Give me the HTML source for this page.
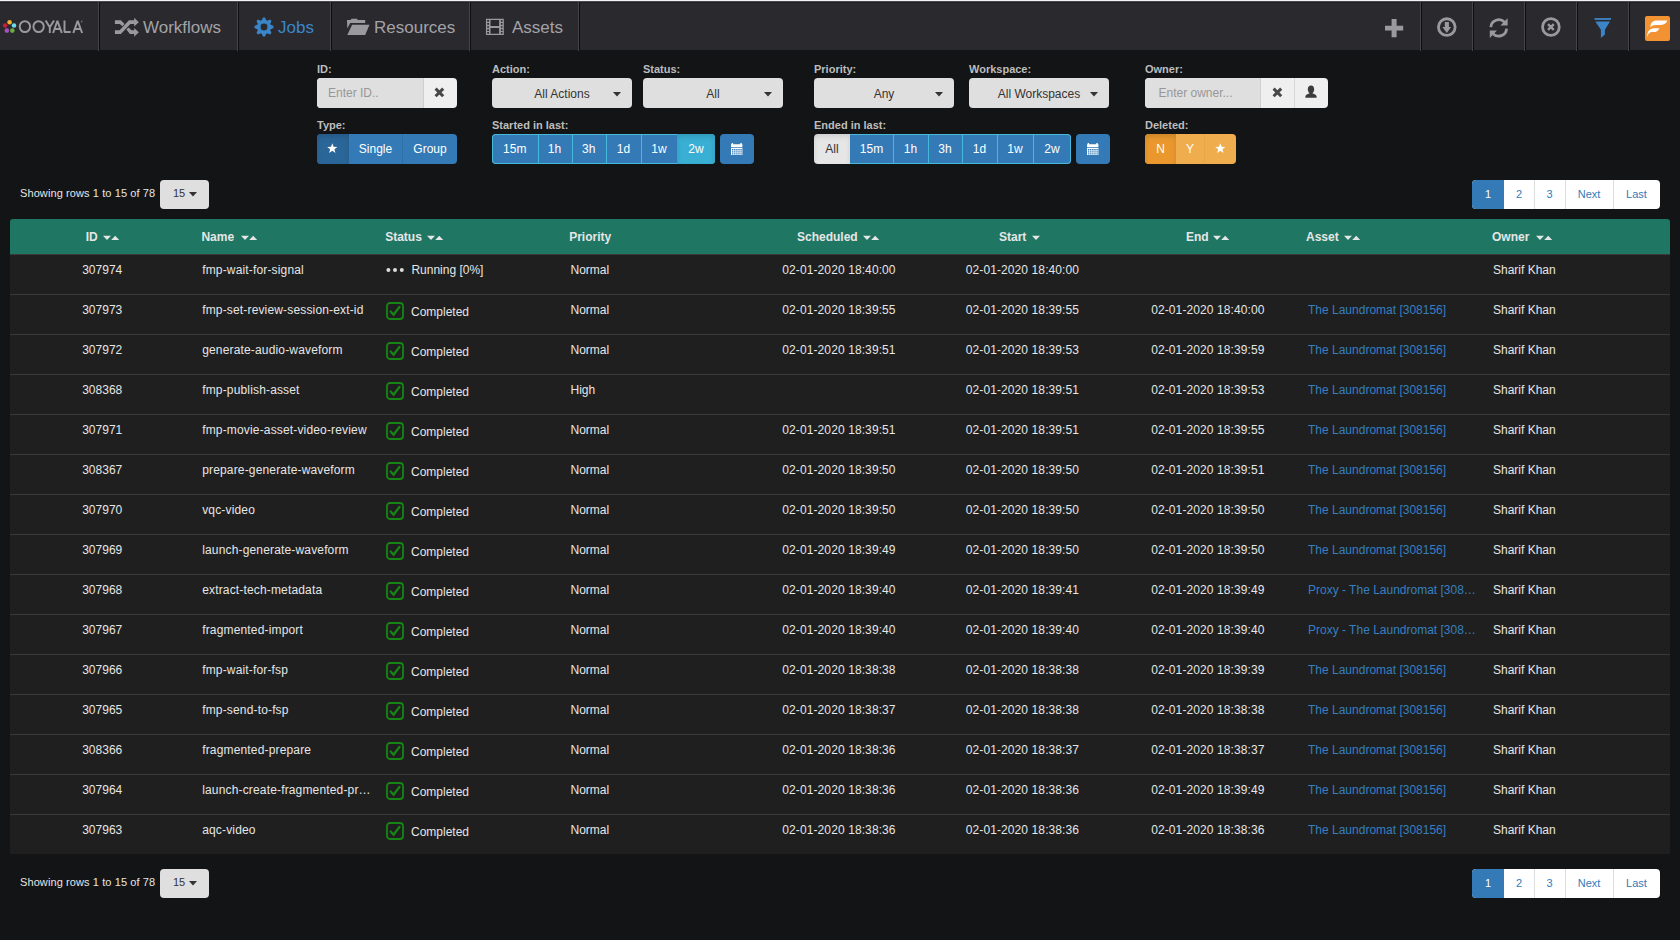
<!DOCTYPE html>
<html><head><meta charset="utf-8"><title>Jobs</title>
<style>
html,body{margin:0;padding:0;}
body{width:1680px;height:940px;overflow:hidden;background:#131416;position:relative;font-family:"Liberation Sans", sans-serif;}
.t{position:absolute;white-space:nowrap;}
.b{position:absolute;}
</style></head><body>
<div class="b" style="left:0px;top:0px;width:1680px;height:50px;background:#2a292e"></div>
<div class="b" style="left:0px;top:0px;width:1680px;height:1px;background:#f3f3f5"></div>
<div class="b" style="left:0px;top:1px;width:1680px;height:1px;background:#4a4a4e"></div>
<div class="b" style="left:0px;top:2px;width:1680px;height:1px;background:#212024"></div>
<div class="b" style="left:98px;top:2px;width:1px;height:49px;background:#454547"></div>
<div class="b" style="left:99px;top:2px;width:1px;height:49px;background:#0d0d0e"></div>
<div class="b" style="left:237px;top:2px;width:1px;height:49px;background:#454547"></div>
<div class="b" style="left:238px;top:2px;width:1px;height:49px;background:#0d0d0e"></div>
<div class="b" style="left:330px;top:2px;width:1px;height:49px;background:#454547"></div>
<div class="b" style="left:331px;top:2px;width:1px;height:49px;background:#0d0d0e"></div>
<div class="b" style="left:469px;top:2px;width:1px;height:49px;background:#454547"></div>
<div class="b" style="left:470px;top:2px;width:1px;height:49px;background:#0d0d0e"></div>
<div class="b" style="left:578px;top:2px;width:1px;height:49px;background:#454547"></div>
<div class="b" style="left:579px;top:2px;width:1px;height:49px;background:#0d0d0e"></div>
<div class="b" style="left:1420px;top:2px;width:1px;height:49px;background:#454547"></div>
<div class="b" style="left:1421px;top:2px;width:1px;height:49px;background:#0d0d0e"></div>
<div class="b" style="left:1472px;top:2px;width:1px;height:49px;background:#454547"></div>
<div class="b" style="left:1473px;top:2px;width:1px;height:49px;background:#0d0d0e"></div>
<div class="b" style="left:1524px;top:2px;width:1px;height:49px;background:#454547"></div>
<div class="b" style="left:1525px;top:2px;width:1px;height:49px;background:#0d0d0e"></div>
<div class="b" style="left:1576px;top:2px;width:1px;height:49px;background:#454547"></div>
<div class="b" style="left:1577px;top:2px;width:1px;height:49px;background:#0d0d0e"></div>
<div class="b" style="left:1628px;top:2px;width:1px;height:49px;background:#454547"></div>
<div class="b" style="left:1629px;top:2px;width:1px;height:49px;background:#0d0d0e"></div>
<svg class="b" style="left:0;top:0" width="98" height="50" viewBox="0 0 98 50">
<circle cx="9.6" cy="22.3" r="2.3" fill="#f5b22f"/>
<circle cx="5.1" cy="25.5" r="2.3" fill="#c21f3a"/>
<circle cx="14.0" cy="25.5" r="2.3" fill="#70d6ea"/>
<circle cx="6.9" cy="30.6" r="2.3" fill="#a84fc0"/>
<circle cx="12.3" cy="30.6" r="2.3" fill="#69ad3a"/>
<g fill="none" stroke="#9a9a9e" stroke-width="1.95" stroke-linejoin="bevel">
<ellipse cx="24.9" cy="26.6" rx="5.2" ry="5.45"/>
<ellipse cx="38.6" cy="26.6" rx="5.2" ry="5.45"/>
<path d="M45.6 20.5 L49.8 27.2 L54 20.5 M49.8 27.2 V33"/>
<path d="M53.1 33 L57.4 20.8 L61.8 33 M54.6 29 H60.3"/>
<path d="M64.5 20.5 V32.05 H70.7"/>
<path d="M73.3 33 L77.7 20.8 L82.1 33 M74.8 29 H80.6"/>
</g>
<circle cx="81.7" cy="21.5" r="0.9" fill="#6a6a6e"/>
</svg>
<svg class="b" style="left:114px;top:17px" width="26" height="21" viewBox="0 0 26 21">
<g fill="#9a9a9e">
<path d="M0.9 3.3 H6.9 L10.5 6.9 L8.3 9.2 L5.8 7.1 H0.9 Z"/>
<path d="M0.9 13.3 H5.6 L14.9 3.3 H20.2 V0.7 L24.8 5.2 L20.2 9.5 V7.1 H16.4 L6.9 17 H0.9 Z"/>
<path d="M12.4 12.6 L14.6 10.4 L17.4 13.3 H20.2 V11 L24.8 15.3 L20.2 19.7 V17 H15.9 Z"/>
</g></svg>
<div class="t" style="left:143px;top:19.00px;font-size:17px;line-height:17px;color:#a3a3a7;">Workflows</div>
<svg class="b" style="left:254px;top:17px" width="20" height="20" viewBox="0 0 20 20">
<path fill-rule="evenodd" fill="#3b86c9" stroke="#3b86c9" stroke-width="1.1" stroke-linejoin="round" d="M8.37 3.61 L9.28 1.03 L10.72 1.03 L11.63 3.61 L13.37 4.32 L15.84 3.15 L16.85 4.16 L15.68 6.63 L16.39 8.37 L18.97 9.28 L18.97 10.72 L16.39 11.63 L15.68 13.37 L16.85 15.84 L15.84 16.85 L13.37 15.68 L11.63 16.39 L10.72 18.97 L9.28 18.97 L8.37 16.39 L6.63 15.68 L4.16 16.85 L3.15 15.84 L4.32 13.37 L3.61 11.63 L1.03 10.72 L1.03 9.28 L3.61 8.37 L4.32 6.63 L3.15 4.16 L4.16 3.15 L6.63 4.32 Z M10 6.0 A4.0 4.0 0 1 0 10 14.0 A4.0 4.0 0 1 0 10 6.0 Z"/>
</svg>
<div class="t" style="left:278px;top:19.00px;font-size:17px;line-height:17px;color:#3b86c9;">Jobs</div>
<svg class="b" style="left:346px;top:18px" width="24" height="18" viewBox="0 0 24 18">
<g fill="#9a9a9e">
<path d="M1 2 H4.5 L5.5 0.7 H10.9 L12 2 H19.2 V5 H4.2 L1.3 10.6 Z"/>
<path d="M6.1 6.8 H23.5 L19.2 17 H1.3 Z"/>
</g></svg>
<div class="t" style="left:374px;top:19.30px;font-size:17px;line-height:17px;color:#a3a3a7;">Resources</div>
<svg class="b" style="left:485px;top:18px" width="20" height="18" viewBox="0 0 20 18">
<path fill-rule="evenodd" fill="#9a9a9e" d="M0.95 0.7 H18.8 V17 H0.95 Z M2.2 2.1 V3.7 H4.0 V2.1 Z M15.9 2.1 V3.7 H17.5 V2.1 Z M2.2 5.1 V6.8 H4.0 V5.1 Z M15.9 5.1 V6.8 H17.5 V5.1 Z M2.2 8.2 V9.8 H4.0 V8.2 Z M15.9 8.2 V9.8 H17.5 V8.2 Z M2.2 11.2 V12.9 H4.0 V11.2 Z M15.9 11.2 V12.9 H17.5 V11.2 Z M2.2 14.1 V15.8 H4.0 V14.1 Z M15.9 14.1 V15.8 H17.5 V14.1 Z M5.5 2.1 V7.9 H14.1 V2.1 Z M5.5 10.1 V15.8 H14.1 V10.1 Z"/>
</svg>
<div class="t" style="left:512px;top:19.30px;font-size:17px;line-height:17px;color:#a3a3a7;">Assets</div>
<svg class="b" style="left:1384px;top:18px" width="20" height="20" viewBox="0 0 20 20">
<path fill="#9a9a9e" d="M7.6 1 H12.6 V7.8 H19.2 V12.6 H12.6 V19.2 H7.6 V12.6 H1 V7.8 H7.6 Z"/></svg>
<svg class="b" style="left:1436px;top:17px" width="22" height="22" viewBox="0 0 22 22">
<circle cx="10.8" cy="10.1" r="8.35" fill="none" stroke="#9a9a9e" stroke-width="2.8"/>
<path fill="#9a9a9e" d="M8.8 5 H12.9 V10 H15.1 L10.8 15.9 L6.4 10 H8.8 Z"/></svg>
<svg class="b" style="left:1488px;top:16.7px" width="22" height="22" viewBox="0 0 22 22">
<g fill="none" stroke="#9a9a9e" stroke-width="2.7">
<path d="M2.8 10.2 A8 8 0 0 1 16.6 5.2"/>
<path d="M18.6 11.6 A8 8 0 0 1 4.8 16.6"/>
</g>
<path fill="#9a9a9e" d="M19.6 1.2 V8.6 H12.4 Z"/>
<path fill="#9a9a9e" d="M1.8 21 V13.6 H9 Z"/>
</svg>
<svg class="b" style="left:1540px;top:17px" width="22" height="22" viewBox="0 0 22 22">
<circle cx="10.9" cy="10" r="8.35" fill="none" stroke="#9a9a9e" stroke-width="2.8"/>
<path stroke="#9a9a9e" stroke-width="2.4" d="M8 7.1 L13.8 12.9 M13.8 7.1 L8 12.9"/></svg>
<svg class="b" style="left:1594px;top:17px" width="19" height="23" viewBox="0 0 19 23">
<rect x="0.55" y="1.07" width="16.45" height="1.8" fill="#3b85c6"/>
<path fill="#3b85c6" d="M1.3 4.4 H16 L10.9 12.7 V17.6 L6.9 20.9 V12.7 Z"/></svg>
<div class="b" style="left:1645px;top:16px;width:25px;height:25px;background:#f39232;border-radius:2px"></div>
<svg class="b" style="left:1645px;top:16px" width="25" height="25" viewBox="0 0 25 25">
<path fill="#fff" d="M5.5 11.3 C5.3 7.2 7.6 4.6 12 4.6 H22.4 C21 7.7 19.4 8.9 15.8 8.9 H11.2 C8.4 8.9 6.6 9.7 5.5 11.3 Z"/>
<path fill="#fff" d="M2 21.2 C2 16 4.5 12.2 9 12.2 H14.4 C13.2 14.9 11.5 16.1 8.6 16.1 H7.2 C4.6 16.1 3 18 2 21.2 Z"/>
</svg>
<div class="t" style="left:317px;top:63.50px;font-size:11px;line-height:11px;color:#bdbdbd;font-weight:bold;">ID:</div>
<div class="t" style="left:492px;top:63.50px;font-size:11px;line-height:11px;color:#bdbdbd;font-weight:bold;">Action:</div>
<div class="t" style="left:643px;top:63.50px;font-size:11px;line-height:11px;color:#bdbdbd;font-weight:bold;">Status:</div>
<div class="t" style="left:814px;top:63.50px;font-size:11px;line-height:11px;color:#bdbdbd;font-weight:bold;">Priority:</div>
<div class="t" style="left:969px;top:63.50px;font-size:11px;line-height:11px;color:#bdbdbd;font-weight:bold;">Workspace:</div>
<div class="t" style="left:1145px;top:63.50px;font-size:11px;line-height:11px;color:#bdbdbd;font-weight:bold;">Owner:</div>
<div class="t" style="left:317px;top:119.80px;font-size:11px;line-height:11px;color:#bdbdbd;font-weight:bold;">Type:</div>
<div class="t" style="left:492px;top:119.80px;font-size:11px;line-height:11px;color:#bdbdbd;font-weight:bold;">Started in last:</div>
<div class="t" style="left:814px;top:119.80px;font-size:11px;line-height:11px;color:#bdbdbd;font-weight:bold;">Ended in last:</div>
<div class="t" style="left:1145px;top:119.80px;font-size:11px;line-height:11px;color:#bdbdbd;font-weight:bold;">Deleted:</div>
<div class="b" style="left:317px;top:78px;width:140px;height:30px;background:#efefef;border-radius:4px"></div>
<div class="b" style="left:317px;top:78px;width:106px;height:30px;background:#e0dfdf;border-radius:4px 0 0 4px"></div>
<div class="b" style="left:423px;top:78px;width:1px;height:30px;background:#cfcfcf"></div>
<div class="t" style="left:328px;top:87.00px;font-size:12px;line-height:12px;color:#979797;">Enter ID..</div>
<svg class="b" style="left:434.4px;top:86.5px" width="11" height="11" viewBox="0 0 11 11"><path stroke="#474747" stroke-width="3" d="M1.6 1.6 L9.2 9.2 M9.2 1.6 L1.6 9.2"/></svg>
<div class="b" style="left:492px;top:78px;width:140px;height:30px;background:#e0dfdf;border-radius:4px"></div>
<div class="t" style="left:492px;width:140px;text-align:center;top:87.80px;font-size:12px;line-height:12px;color:#333;">All Actions</div>
<svg class="b" style="left:612.5px;top:91.6px" width="8" height="5" viewBox="0 0 8 5"><path fill="#333" d="M0 0 H8 L4 4.5 Z"/></svg>
<div class="b" style="left:643px;top:78px;width:140px;height:30px;background:#e0dfdf;border-radius:4px"></div>
<div class="t" style="left:643px;width:140px;text-align:center;top:87.80px;font-size:12px;line-height:12px;color:#333;">All</div>
<svg class="b" style="left:763.5px;top:91.6px" width="8" height="5" viewBox="0 0 8 5"><path fill="#333" d="M0 0 H8 L4 4.5 Z"/></svg>
<div class="b" style="left:814px;top:78px;width:140px;height:30px;background:#e0dfdf;border-radius:4px"></div>
<div class="t" style="left:814px;width:140px;text-align:center;top:87.80px;font-size:12px;line-height:12px;color:#333;">Any</div>
<svg class="b" style="left:934.5px;top:91.6px" width="8" height="5" viewBox="0 0 8 5"><path fill="#333" d="M0 0 H8 L4 4.5 Z"/></svg>
<div class="b" style="left:969px;top:78px;width:140px;height:30px;background:#e0dfdf;border-radius:4px"></div>
<div class="t" style="left:969px;width:140px;text-align:center;top:87.80px;font-size:12px;line-height:12px;color:#333;">All Workspaces</div>
<svg class="b" style="left:1089.5px;top:91.6px" width="8" height="5" viewBox="0 0 8 5"><path fill="#333" d="M0 0 H8 L4 4.5 Z"/></svg>
<div class="b" style="left:1145px;top:78px;width:183px;height:30px;background:#efefef;border-radius:4px"></div>
<div class="b" style="left:1145px;top:78px;width:115px;height:30px;background:#e0dfdf;border-radius:4px 0 0 4px"></div>
<div class="b" style="left:1260px;top:78px;width:1px;height:30px;background:#cfcfcf"></div>
<div class="b" style="left:1294px;top:78px;width:1px;height:30px;background:#d6d6d6"></div>
<div class="t" style="left:1158.5px;top:87.00px;font-size:12px;line-height:12px;color:#979797;">Enter owner...</div>
<svg class="b" style="left:1271.9px;top:86.5px" width="11" height="11" viewBox="0 0 11 11"><path stroke="#474747" stroke-width="3" d="M1.6 1.6 L9.2 9.2 M9.2 1.6 L1.6 9.2"/></svg>
<svg class="b" style="left:1304px;top:85px" width="14" height="14" viewBox="0 0 14 14">
<path fill="#3c3c3c" d="M7 0.6 C9 0.6 10.2 2.2 10.2 4.2 C10.2 6 9.4 7.4 8.6 7.9 V8.6 C11 9.2 12.6 10.2 12.6 11.4 V12.8 H1.4 V11.4 C1.4 10.2 3 9.2 5.4 8.6 V7.9 C4.6 7.4 3.8 6 3.8 4.2 C3.8 2.2 5 0.6 7 0.6 Z"/></svg>
<div class="b" style="left:317px;top:134px;width:140px;height:30px;background:#337ab7;border-radius:4px"></div>
<div class="b" style="left:317px;top:134px;width:32px;height:30px;background:#2b6699;border-radius:4px 0 0 4px;box-shadow:inset 0 3px 5px rgba(0,0,0,.125)"></div>
<div class="b" style="left:402px;top:134px;width:1px;height:30px;background:#2f6fa7"></div>
<svg class="b" style="left:327.1px;top:143.4px" width="10.6" height="10.6" viewBox="0 0 10 10"><path fill="#fff" d="M5 0.3 L6.2 3.6 L9.8 3.7 L7 5.9 L8 9.5 L5 7.4 L2 9.5 L3 5.9 L0.2 3.7 L3.8 3.6 Z"/></svg>
<div class="t" style="left:349px;width:53px;text-align:center;top:143.10px;font-size:12px;line-height:12px;color:#fff;">Single</div>
<div class="t" style="left:403px;width:54px;text-align:center;top:143.10px;font-size:12px;line-height:12px;color:#fff;">Group</div>
<div class="b" style="left:492px;top:134px;width:223px;height:30px;background:#337ab7;border-radius:4px;box-shadow:inset 0 0 0 1px #46b8da"></div>
<div class="b" style="left:677px;top:134px;width:38px;height:30px;background:#39afd3;border-radius:0 4px 4px 0;box-shadow:inset 0 3px 5px rgba(0,0,0,.125)"></div>
<div class="b" style="left:537.5px;top:134px;width:1px;height:30px;background:#46b8da"></div>
<div class="b" style="left:571.5px;top:134px;width:1px;height:30px;background:#46b8da"></div>
<div class="b" style="left:606px;top:134px;width:1px;height:30px;background:#46b8da"></div>
<div class="b" style="left:641px;top:134px;width:1px;height:30px;background:#46b8da"></div>
<div class="t" style="left:492px;width:45.5px;text-align:center;top:143.10px;font-size:12px;line-height:12px;color:#fff;">15m</div>
<div class="t" style="left:537.5px;width:34.0px;text-align:center;top:143.10px;font-size:12px;line-height:12px;color:#fff;">1h</div>
<div class="t" style="left:571.5px;width:34.5px;text-align:center;top:143.10px;font-size:12px;line-height:12px;color:#fff;">3h</div>
<div class="t" style="left:606px;width:35px;text-align:center;top:143.10px;font-size:12px;line-height:12px;color:#fff;">1d</div>
<div class="t" style="left:641px;width:36px;text-align:center;top:143.10px;font-size:12px;line-height:12px;color:#fff;">1w</div>
<div class="t" style="left:677px;width:38px;text-align:center;top:143.10px;font-size:12px;line-height:12px;color:#fff;">2w</div>
<div class="b" style="left:720px;top:134px;width:34px;height:30px;background:#337ab7;border-radius:4px"></div>
<svg class="b" style="left:730.6px;top:143px" width="12" height="13" viewBox="0 0 12 13"><path fill-rule="evenodd" fill="#fff" d="M0.7 0 H2.1 V1.2 H9.3 V0 H10.7 V1.2 H11.4 V3.9 H0 V1.2 H0.7 Z M0 4.8 H11.4 V12 H0 Z M1.0 6.0 h1.4 v1.4 h-1.4 Z M3.1 6.0 h1.4 v1.4 h-1.4 Z M5.2 6.0 h1.4 v1.4 h-1.4 Z M7.3 6.0 h1.4 v1.4 h-1.4 Z M9.4 6.0 h1.4 v1.4 h-1.4 Z M1.0 8.2 h1.4 v1.4 h-1.4 Z M3.1 8.2 h1.4 v1.4 h-1.4 Z M5.2 8.2 h1.4 v1.4 h-1.4 Z M7.3 8.2 h1.4 v1.4 h-1.4 Z M9.4 8.2 h1.4 v1.4 h-1.4 Z M1.0 10.2 h1.4 v1.4 h-1.4 Z M3.1 10.2 h1.4 v1.4 h-1.4 Z M5.2 10.2 h1.4 v1.4 h-1.4 Z M7.3 10.2 h1.4 v1.4 h-1.4 Z M9.4 10.2 h1.4 v1.4 h-1.4 Z"/></svg>
<div class="b" style="left:814px;top:134px;width:257px;height:30px;background:#337ab7;border-radius:4px;box-shadow:inset 0 0 0 1px #46b8da"></div>
<div class="b" style="left:813px;top:133px;width:37px;height:32px;background:#131416"></div>
<div class="b" style="left:814px;top:134px;width:36px;height:30px;background:#e6e6e6;border-radius:4px 0 0 4px;box-shadow:inset 0 3px 5px rgba(0,0,0,.1)"></div>
<div class="b" style="left:893px;top:134px;width:1px;height:30px;background:#46b8da"></div>
<div class="b" style="left:928px;top:134px;width:1px;height:30px;background:#46b8da"></div>
<div class="b" style="left:962px;top:134px;width:1px;height:30px;background:#46b8da"></div>
<div class="b" style="left:997px;top:134px;width:1px;height:30px;background:#46b8da"></div>
<div class="b" style="left:1033px;top:134px;width:1px;height:30px;background:#46b8da"></div>
<div class="t" style="left:814px;width:36px;text-align:center;top:143.10px;font-size:12px;line-height:12px;color:#333;">All</div>
<div class="t" style="left:850px;width:43px;text-align:center;top:143.10px;font-size:12px;line-height:12px;color:#fff;">15m</div>
<div class="t" style="left:893px;width:35px;text-align:center;top:143.10px;font-size:12px;line-height:12px;color:#fff;">1h</div>
<div class="t" style="left:928px;width:34px;text-align:center;top:143.10px;font-size:12px;line-height:12px;color:#fff;">3h</div>
<div class="t" style="left:962px;width:35px;text-align:center;top:143.10px;font-size:12px;line-height:12px;color:#fff;">1d</div>
<div class="t" style="left:997px;width:36px;text-align:center;top:143.10px;font-size:12px;line-height:12px;color:#fff;">1w</div>
<div class="t" style="left:1033px;width:38px;text-align:center;top:143.10px;font-size:12px;line-height:12px;color:#fff;">2w</div>
<div class="b" style="left:1076px;top:134px;width:34px;height:30px;background:#337ab7;border-radius:4px"></div>
<svg class="b" style="left:1086.6px;top:143px" width="12" height="13" viewBox="0 0 12 13"><path fill-rule="evenodd" fill="#fff" d="M0.7 0 H2.1 V1.2 H9.3 V0 H10.7 V1.2 H11.4 V3.9 H0 V1.2 H0.7 Z M0 4.8 H11.4 V12 H0 Z M1.0 6.0 h1.4 v1.4 h-1.4 Z M3.1 6.0 h1.4 v1.4 h-1.4 Z M5.2 6.0 h1.4 v1.4 h-1.4 Z M7.3 6.0 h1.4 v1.4 h-1.4 Z M9.4 6.0 h1.4 v1.4 h-1.4 Z M1.0 8.2 h1.4 v1.4 h-1.4 Z M3.1 8.2 h1.4 v1.4 h-1.4 Z M5.2 8.2 h1.4 v1.4 h-1.4 Z M7.3 8.2 h1.4 v1.4 h-1.4 Z M9.4 8.2 h1.4 v1.4 h-1.4 Z M1.0 10.2 h1.4 v1.4 h-1.4 Z M3.1 10.2 h1.4 v1.4 h-1.4 Z M5.2 10.2 h1.4 v1.4 h-1.4 Z M7.3 10.2 h1.4 v1.4 h-1.4 Z M9.4 10.2 h1.4 v1.4 h-1.4 Z"/></svg>
<div class="b" style="left:1145px;top:134px;width:91px;height:30px;background:#f0ad4e;border-radius:4px"></div>
<div class="b" style="left:1145px;top:134px;width:31px;height:30px;background:#ea982e;border-radius:4px 0 0 4px;box-shadow:inset 0 3px 5px rgba(0,0,0,.125)"></div>
<div class="b" style="left:1204px;top:134px;width:1px;height:30px;background:#eaa547"></div>
<div class="t" style="left:1145px;width:31px;text-align:center;top:143.10px;font-size:12px;line-height:12px;color:#fff;">N</div>
<div class="t" style="left:1176px;width:28px;text-align:center;top:143.10px;font-size:12px;line-height:12px;color:#fff;">Y</div>
<svg class="b" style="left:1215px;top:143.4px" width="10.6" height="10.6" viewBox="0 0 10 10"><path fill="#fff" d="M5 0.3 L6.2 3.6 L9.8 3.7 L7 5.9 L8 9.5 L5 7.4 L2 9.5 L3 5.9 L0.2 3.7 L3.8 3.6 Z"/></svg>
<div class="t" style="left:20px;top:188.25px;font-size:11px;line-height:11px;color:#e6e6e6;letter-spacing:0.1px;">Showing rows 1 to 15 of 78</div>
<div class="b" style="left:160px;top:180px;width:49px;height:29px;background:#e0dfdf;border-radius:4px"></div>
<div class="t" style="left:173px;top:188.45px;font-size:11px;line-height:11px;color:#333;">15</div>
<svg class="b" style="left:188.5px;top:192px" width="8" height="5" viewBox="0 0 8 5"><path fill="#333" d="M0 0 H8 L4 4.5 Z"/></svg>
<div class="b" style="left:1472px;top:180px;width:188px;height:29px;background:#fff;border-radius:4px"></div>
<div class="b" style="left:1472px;top:180px;width:32px;height:29px;background:#337ab7;border-radius:4px 0 0 4px"></div>
<div class="b" style="left:1534px;top:180px;width:1px;height:29px;background:#dddddd"></div>
<div class="b" style="left:1565px;top:180px;width:1px;height:29px;background:#dddddd"></div>
<div class="b" style="left:1613px;top:180px;width:1px;height:29px;background:#dddddd"></div>
<div class="t" style="left:1472px;width:32px;text-align:center;top:188.55px;font-size:11px;line-height:11px;color:#fff;">1</div>
<div class="t" style="left:1504px;width:30px;text-align:center;top:188.55px;font-size:11px;line-height:11px;color:#337ab7;">2</div>
<div class="t" style="left:1534px;width:31px;text-align:center;top:188.55px;font-size:11px;line-height:11px;color:#337ab7;">3</div>
<div class="t" style="left:1565px;width:48px;text-align:center;top:188.55px;font-size:11px;line-height:11px;color:#337ab7;">Next</div>
<div class="t" style="left:1613px;width:47px;text-align:center;top:188.55px;font-size:11px;line-height:11px;color:#337ab7;">Last</div>
<div class="t" style="left:20px;top:877.25px;font-size:11px;line-height:11px;color:#e6e6e6;letter-spacing:0.1px;">Showing rows 1 to 15 of 78</div>
<div class="b" style="left:160px;top:869px;width:49px;height:29px;background:#e0dfdf;border-radius:4px"></div>
<div class="t" style="left:173px;top:877.45px;font-size:11px;line-height:11px;color:#333;">15</div>
<svg class="b" style="left:188.5px;top:881px" width="8" height="5" viewBox="0 0 8 5"><path fill="#333" d="M0 0 H8 L4 4.5 Z"/></svg>
<div class="b" style="left:1472px;top:869px;width:188px;height:29px;background:#fff;border-radius:4px"></div>
<div class="b" style="left:1472px;top:869px;width:32px;height:29px;background:#337ab7;border-radius:4px 0 0 4px"></div>
<div class="b" style="left:1534px;top:869px;width:1px;height:29px;background:#dddddd"></div>
<div class="b" style="left:1565px;top:869px;width:1px;height:29px;background:#dddddd"></div>
<div class="b" style="left:1613px;top:869px;width:1px;height:29px;background:#dddddd"></div>
<div class="t" style="left:1472px;width:32px;text-align:center;top:877.55px;font-size:11px;line-height:11px;color:#fff;">1</div>
<div class="t" style="left:1504px;width:30px;text-align:center;top:877.55px;font-size:11px;line-height:11px;color:#337ab7;">2</div>
<div class="t" style="left:1534px;width:31px;text-align:center;top:877.55px;font-size:11px;line-height:11px;color:#337ab7;">3</div>
<div class="t" style="left:1565px;width:48px;text-align:center;top:877.55px;font-size:11px;line-height:11px;color:#337ab7;">Next</div>
<div class="t" style="left:1613px;width:47px;text-align:center;top:877.55px;font-size:11px;line-height:11px;color:#337ab7;">Last</div>
<div class="b" style="left:10px;top:219px;width:1660px;height:35px;background:#1f7663;border-radius:3px 3px 0 0"></div>
<div class="b" style="left:10px;top:254px;width:1660px;height:600px;background:#1f1f1f"></div>
<div class="b" style="left:10px;top:254px;width:1660px;height:1px;background:#3a3a3a"></div>
<div class="b" style="left:10px;top:294px;width:1660px;height:1px;background:#3a3a3a"></div>
<div class="b" style="left:10px;top:334px;width:1660px;height:1px;background:#3a3a3a"></div>
<div class="b" style="left:10px;top:374px;width:1660px;height:1px;background:#3a3a3a"></div>
<div class="b" style="left:10px;top:414px;width:1660px;height:1px;background:#3a3a3a"></div>
<div class="b" style="left:10px;top:454px;width:1660px;height:1px;background:#3a3a3a"></div>
<div class="b" style="left:10px;top:494px;width:1660px;height:1px;background:#3a3a3a"></div>
<div class="b" style="left:10px;top:534px;width:1660px;height:1px;background:#3a3a3a"></div>
<div class="b" style="left:10px;top:574px;width:1660px;height:1px;background:#3a3a3a"></div>
<div class="b" style="left:10px;top:614px;width:1660px;height:1px;background:#3a3a3a"></div>
<div class="b" style="left:10px;top:654px;width:1660px;height:1px;background:#3a3a3a"></div>
<div class="b" style="left:10px;top:694px;width:1660px;height:1px;background:#3a3a3a"></div>
<div class="b" style="left:10px;top:734px;width:1660px;height:1px;background:#3a3a3a"></div>
<div class="b" style="left:10px;top:774px;width:1660px;height:1px;background:#3a3a3a"></div>
<div class="b" style="left:10px;top:814px;width:1660px;height:1px;background:#3a3a3a"></div>
<div class="t" style="left:85.7px;top:231.00px;font-size:12px;line-height:12px;color:#e6e6e6;font-weight:bold;">ID</div>
<svg class="b" style="left:103.2px;top:235.3px" width="16" height="6" viewBox="0 0 16 6"><path fill="#e6e6e6" d="M0 0.8 H8 L4 5 Z M8.2 5 L12.2 0.8 L16.2 5 Z"/></svg>
<div class="t" style="left:201.4px;top:231.00px;font-size:12px;line-height:12px;color:#e6e6e6;font-weight:bold;">Name</div>
<svg class="b" style="left:240.6px;top:235.3px" width="16" height="6" viewBox="0 0 16 6"><path fill="#e6e6e6" d="M0 0.8 H8 L4 5 Z M8.2 5 L12.2 0.8 L16.2 5 Z"/></svg>
<div class="t" style="left:385.2px;top:231.00px;font-size:12px;line-height:12px;color:#e6e6e6;font-weight:bold;">Status</div>
<svg class="b" style="left:427.4px;top:235.3px" width="16" height="6" viewBox="0 0 16 6"><path fill="#e6e6e6" d="M0 0.8 H8 L4 5 Z M8.2 5 L12.2 0.8 L16.2 5 Z"/></svg>
<div class="t" style="left:569.2px;top:231.00px;font-size:12px;line-height:12px;color:#e6e6e6;font-weight:bold;">Priority</div>
<div class="t" style="left:797px;top:231.00px;font-size:12px;line-height:12px;color:#e6e6e6;font-weight:bold;">Scheduled</div>
<svg class="b" style="left:863px;top:235.3px" width="16" height="6" viewBox="0 0 16 6"><path fill="#e6e6e6" d="M0 0.8 H8 L4 5 Z M8.2 5 L12.2 0.8 L16.2 5 Z"/></svg>
<div class="t" style="left:999px;top:231.00px;font-size:12px;line-height:12px;color:#e6e6e6;font-weight:bold;">Start</div>
<svg class="b" style="left:1032px;top:235.3px" width="9" height="6" viewBox="0 0 9 6"><path fill="#e6e6e6" d="M0 0.8 H8 L4 5 Z"/></svg>
<div class="t" style="left:1186px;top:231.00px;font-size:12px;line-height:12px;color:#e6e6e6;font-weight:bold;">End</div>
<svg class="b" style="left:1213px;top:235.3px" width="16" height="6" viewBox="0 0 16 6"><path fill="#e6e6e6" d="M0 0.8 H8 L4 5 Z M8.2 5 L12.2 0.8 L16.2 5 Z"/></svg>
<div class="t" style="left:1306px;top:231.00px;font-size:12px;line-height:12px;color:#e6e6e6;font-weight:bold;">Asset</div>
<svg class="b" style="left:1344px;top:235.3px" width="16" height="6" viewBox="0 0 16 6"><path fill="#e6e6e6" d="M0 0.8 H8 L4 5 Z M8.2 5 L12.2 0.8 L16.2 5 Z"/></svg>
<div class="t" style="left:1492px;top:231.00px;font-size:12px;line-height:12px;color:#e6e6e6;font-weight:bold;">Owner</div>
<svg class="b" style="left:1536px;top:235.3px" width="16" height="6" viewBox="0 0 16 6"><path fill="#e6e6e6" d="M0 0.8 H8 L4 5 Z M8.2 5 L12.2 0.8 L16.2 5 Z"/></svg>
<div class="t" style="left:10.0px;width:184.44444444444446px;text-align:center;top:264.00px;font-size:12px;line-height:12px;color:#e6e6e6;">307974</div>
<div class="t" style="left:202.2px;top:264.00px;font-size:12px;line-height:12px;color:#e6e6e6;letter-spacing:0.16px;">fmp-wait-for-signal</div>
<svg class="b" style="left:386px;top:268px" width="18" height="8" viewBox="0 0 18 8"><g fill="#dcdcdc"><circle cx="2.4" cy="2" r="2"/><circle cx="9" cy="2" r="2"/><circle cx="15.8" cy="2" r="2"/></g></svg>
<div class="t" style="left:411.4px;top:264.00px;font-size:12px;line-height:12px;color:#e6e6e6;">Running [0%]</div>
<div class="t" style="left:570.5px;top:264.00px;font-size:12px;line-height:12px;color:#e6e6e6;">Normal</div>
<div class="t" style="left:746.7777777777778px;width:184.44444444444446px;text-align:center;top:264.00px;font-size:12px;line-height:12px;color:#e6e6e6;letter-spacing:0.1px;">02-01-2020 18:40:00</div>
<div class="t" style="left:930.2222222222223px;width:184.44444444444446px;text-align:center;top:264.00px;font-size:12px;line-height:12px;color:#e6e6e6;letter-spacing:0.1px;">02-01-2020 18:40:00</div>
<div class="t" style="left:1493px;top:264.00px;font-size:12px;line-height:12px;color:#e6e6e6;">Sharif Khan</div>
<div class="t" style="left:10.0px;width:184.44444444444446px;text-align:center;top:304.00px;font-size:12px;line-height:12px;color:#e6e6e6;">307973</div>
<div class="t" style="left:202.2px;top:304.00px;font-size:12px;line-height:12px;color:#e6e6e6;letter-spacing:0.16px;">fmp-set-review-session-ext-id</div>
<svg class="b" style="left:386px;top:302px" width="18" height="18" viewBox="0 0 18 18">
<rect x="1" y="1" width="16" height="16" rx="3" fill="none" stroke="#168516" stroke-width="1.8"/>
<path fill="none" stroke="#168516" stroke-width="2.3" stroke-linecap="round" d="M4.6 9.5 L7.6 12.8 L13.4 5"/></svg>
<div class="t" style="left:411px;top:305.70px;font-size:12px;line-height:12px;color:#e6e6e6;">Completed</div>
<div class="t" style="left:570.5px;top:304.00px;font-size:12px;line-height:12px;color:#e6e6e6;">Normal</div>
<div class="t" style="left:746.7777777777778px;width:184.44444444444446px;text-align:center;top:304.00px;font-size:12px;line-height:12px;color:#e6e6e6;letter-spacing:0.1px;">02-01-2020 18:39:55</div>
<div class="t" style="left:930.2222222222223px;width:184.44444444444446px;text-align:center;top:304.00px;font-size:12px;line-height:12px;color:#e6e6e6;letter-spacing:0.1px;">02-01-2020 18:39:55</div>
<div class="t" style="left:1115.6666666666667px;width:184.44444444444457px;text-align:center;top:304.00px;font-size:12px;line-height:12px;color:#e6e6e6;letter-spacing:0.1px;">02-01-2020 18:40:00</div>
<div class="t" style="left:1308px;top:304.00px;font-size:12px;line-height:12px;color:#367fc0;">The Laundromat [308156]</div>
<div class="t" style="left:1493px;top:304.00px;font-size:12px;line-height:12px;color:#e6e6e6;">Sharif Khan</div>
<div class="t" style="left:10.0px;width:184.44444444444446px;text-align:center;top:344.00px;font-size:12px;line-height:12px;color:#e6e6e6;">307972</div>
<div class="t" style="left:202.2px;top:344.00px;font-size:12px;line-height:12px;color:#e6e6e6;letter-spacing:0.16px;">generate-audio-waveform</div>
<svg class="b" style="left:386px;top:342px" width="18" height="18" viewBox="0 0 18 18">
<rect x="1" y="1" width="16" height="16" rx="3" fill="none" stroke="#168516" stroke-width="1.8"/>
<path fill="none" stroke="#168516" stroke-width="2.3" stroke-linecap="round" d="M4.6 9.5 L7.6 12.8 L13.4 5"/></svg>
<div class="t" style="left:411px;top:345.70px;font-size:12px;line-height:12px;color:#e6e6e6;">Completed</div>
<div class="t" style="left:570.5px;top:344.00px;font-size:12px;line-height:12px;color:#e6e6e6;">Normal</div>
<div class="t" style="left:746.7777777777778px;width:184.44444444444446px;text-align:center;top:344.00px;font-size:12px;line-height:12px;color:#e6e6e6;letter-spacing:0.1px;">02-01-2020 18:39:51</div>
<div class="t" style="left:930.2222222222223px;width:184.44444444444446px;text-align:center;top:344.00px;font-size:12px;line-height:12px;color:#e6e6e6;letter-spacing:0.1px;">02-01-2020 18:39:53</div>
<div class="t" style="left:1115.6666666666667px;width:184.44444444444457px;text-align:center;top:344.00px;font-size:12px;line-height:12px;color:#e6e6e6;letter-spacing:0.1px;">02-01-2020 18:39:59</div>
<div class="t" style="left:1308px;top:344.00px;font-size:12px;line-height:12px;color:#367fc0;">The Laundromat [308156]</div>
<div class="t" style="left:1493px;top:344.00px;font-size:12px;line-height:12px;color:#e6e6e6;">Sharif Khan</div>
<div class="t" style="left:10.0px;width:184.44444444444446px;text-align:center;top:384.00px;font-size:12px;line-height:12px;color:#e6e6e6;">308368</div>
<div class="t" style="left:202.2px;top:384.00px;font-size:12px;line-height:12px;color:#e6e6e6;letter-spacing:0.16px;">fmp-publish-asset</div>
<svg class="b" style="left:386px;top:382px" width="18" height="18" viewBox="0 0 18 18">
<rect x="1" y="1" width="16" height="16" rx="3" fill="none" stroke="#168516" stroke-width="1.8"/>
<path fill="none" stroke="#168516" stroke-width="2.3" stroke-linecap="round" d="M4.6 9.5 L7.6 12.8 L13.4 5"/></svg>
<div class="t" style="left:411px;top:385.70px;font-size:12px;line-height:12px;color:#e6e6e6;">Completed</div>
<div class="t" style="left:570.5px;top:384.00px;font-size:12px;line-height:12px;color:#e6e6e6;">High</div>
<div class="t" style="left:930.2222222222223px;width:184.44444444444446px;text-align:center;top:384.00px;font-size:12px;line-height:12px;color:#e6e6e6;letter-spacing:0.1px;">02-01-2020 18:39:51</div>
<div class="t" style="left:1115.6666666666667px;width:184.44444444444457px;text-align:center;top:384.00px;font-size:12px;line-height:12px;color:#e6e6e6;letter-spacing:0.1px;">02-01-2020 18:39:53</div>
<div class="t" style="left:1308px;top:384.00px;font-size:12px;line-height:12px;color:#367fc0;">The Laundromat [308156]</div>
<div class="t" style="left:1493px;top:384.00px;font-size:12px;line-height:12px;color:#e6e6e6;">Sharif Khan</div>
<div class="t" style="left:10.0px;width:184.44444444444446px;text-align:center;top:424.00px;font-size:12px;line-height:12px;color:#e6e6e6;">307971</div>
<div class="t" style="left:202.2px;top:424.00px;font-size:12px;line-height:12px;color:#e6e6e6;letter-spacing:0.16px;">fmp-movie-asset-video-review</div>
<svg class="b" style="left:386px;top:422px" width="18" height="18" viewBox="0 0 18 18">
<rect x="1" y="1" width="16" height="16" rx="3" fill="none" stroke="#168516" stroke-width="1.8"/>
<path fill="none" stroke="#168516" stroke-width="2.3" stroke-linecap="round" d="M4.6 9.5 L7.6 12.8 L13.4 5"/></svg>
<div class="t" style="left:411px;top:425.70px;font-size:12px;line-height:12px;color:#e6e6e6;">Completed</div>
<div class="t" style="left:570.5px;top:424.00px;font-size:12px;line-height:12px;color:#e6e6e6;">Normal</div>
<div class="t" style="left:746.7777777777778px;width:184.44444444444446px;text-align:center;top:424.00px;font-size:12px;line-height:12px;color:#e6e6e6;letter-spacing:0.1px;">02-01-2020 18:39:51</div>
<div class="t" style="left:930.2222222222223px;width:184.44444444444446px;text-align:center;top:424.00px;font-size:12px;line-height:12px;color:#e6e6e6;letter-spacing:0.1px;">02-01-2020 18:39:51</div>
<div class="t" style="left:1115.6666666666667px;width:184.44444444444457px;text-align:center;top:424.00px;font-size:12px;line-height:12px;color:#e6e6e6;letter-spacing:0.1px;">02-01-2020 18:39:55</div>
<div class="t" style="left:1308px;top:424.00px;font-size:12px;line-height:12px;color:#367fc0;">The Laundromat [308156]</div>
<div class="t" style="left:1493px;top:424.00px;font-size:12px;line-height:12px;color:#e6e6e6;">Sharif Khan</div>
<div class="t" style="left:10.0px;width:184.44444444444446px;text-align:center;top:464.00px;font-size:12px;line-height:12px;color:#e6e6e6;">308367</div>
<div class="t" style="left:202.2px;top:464.00px;font-size:12px;line-height:12px;color:#e6e6e6;letter-spacing:0.16px;">prepare-generate-waveform</div>
<svg class="b" style="left:386px;top:462px" width="18" height="18" viewBox="0 0 18 18">
<rect x="1" y="1" width="16" height="16" rx="3" fill="none" stroke="#168516" stroke-width="1.8"/>
<path fill="none" stroke="#168516" stroke-width="2.3" stroke-linecap="round" d="M4.6 9.5 L7.6 12.8 L13.4 5"/></svg>
<div class="t" style="left:411px;top:465.70px;font-size:12px;line-height:12px;color:#e6e6e6;">Completed</div>
<div class="t" style="left:570.5px;top:464.00px;font-size:12px;line-height:12px;color:#e6e6e6;">Normal</div>
<div class="t" style="left:746.7777777777778px;width:184.44444444444446px;text-align:center;top:464.00px;font-size:12px;line-height:12px;color:#e6e6e6;letter-spacing:0.1px;">02-01-2020 18:39:50</div>
<div class="t" style="left:930.2222222222223px;width:184.44444444444446px;text-align:center;top:464.00px;font-size:12px;line-height:12px;color:#e6e6e6;letter-spacing:0.1px;">02-01-2020 18:39:50</div>
<div class="t" style="left:1115.6666666666667px;width:184.44444444444457px;text-align:center;top:464.00px;font-size:12px;line-height:12px;color:#e6e6e6;letter-spacing:0.1px;">02-01-2020 18:39:51</div>
<div class="t" style="left:1308px;top:464.00px;font-size:12px;line-height:12px;color:#367fc0;">The Laundromat [308156]</div>
<div class="t" style="left:1493px;top:464.00px;font-size:12px;line-height:12px;color:#e6e6e6;">Sharif Khan</div>
<div class="t" style="left:10.0px;width:184.44444444444446px;text-align:center;top:504.00px;font-size:12px;line-height:12px;color:#e6e6e6;">307970</div>
<div class="t" style="left:202.2px;top:504.00px;font-size:12px;line-height:12px;color:#e6e6e6;letter-spacing:0.16px;">vqc-video</div>
<svg class="b" style="left:386px;top:502px" width="18" height="18" viewBox="0 0 18 18">
<rect x="1" y="1" width="16" height="16" rx="3" fill="none" stroke="#168516" stroke-width="1.8"/>
<path fill="none" stroke="#168516" stroke-width="2.3" stroke-linecap="round" d="M4.6 9.5 L7.6 12.8 L13.4 5"/></svg>
<div class="t" style="left:411px;top:505.70px;font-size:12px;line-height:12px;color:#e6e6e6;">Completed</div>
<div class="t" style="left:570.5px;top:504.00px;font-size:12px;line-height:12px;color:#e6e6e6;">Normal</div>
<div class="t" style="left:746.7777777777778px;width:184.44444444444446px;text-align:center;top:504.00px;font-size:12px;line-height:12px;color:#e6e6e6;letter-spacing:0.1px;">02-01-2020 18:39:50</div>
<div class="t" style="left:930.2222222222223px;width:184.44444444444446px;text-align:center;top:504.00px;font-size:12px;line-height:12px;color:#e6e6e6;letter-spacing:0.1px;">02-01-2020 18:39:50</div>
<div class="t" style="left:1115.6666666666667px;width:184.44444444444457px;text-align:center;top:504.00px;font-size:12px;line-height:12px;color:#e6e6e6;letter-spacing:0.1px;">02-01-2020 18:39:50</div>
<div class="t" style="left:1308px;top:504.00px;font-size:12px;line-height:12px;color:#367fc0;">The Laundromat [308156]</div>
<div class="t" style="left:1493px;top:504.00px;font-size:12px;line-height:12px;color:#e6e6e6;">Sharif Khan</div>
<div class="t" style="left:10.0px;width:184.44444444444446px;text-align:center;top:544.00px;font-size:12px;line-height:12px;color:#e6e6e6;">307969</div>
<div class="t" style="left:202.2px;top:544.00px;font-size:12px;line-height:12px;color:#e6e6e6;letter-spacing:0.16px;">launch-generate-waveform</div>
<svg class="b" style="left:386px;top:542px" width="18" height="18" viewBox="0 0 18 18">
<rect x="1" y="1" width="16" height="16" rx="3" fill="none" stroke="#168516" stroke-width="1.8"/>
<path fill="none" stroke="#168516" stroke-width="2.3" stroke-linecap="round" d="M4.6 9.5 L7.6 12.8 L13.4 5"/></svg>
<div class="t" style="left:411px;top:545.70px;font-size:12px;line-height:12px;color:#e6e6e6;">Completed</div>
<div class="t" style="left:570.5px;top:544.00px;font-size:12px;line-height:12px;color:#e6e6e6;">Normal</div>
<div class="t" style="left:746.7777777777778px;width:184.44444444444446px;text-align:center;top:544.00px;font-size:12px;line-height:12px;color:#e6e6e6;letter-spacing:0.1px;">02-01-2020 18:39:49</div>
<div class="t" style="left:930.2222222222223px;width:184.44444444444446px;text-align:center;top:544.00px;font-size:12px;line-height:12px;color:#e6e6e6;letter-spacing:0.1px;">02-01-2020 18:39:50</div>
<div class="t" style="left:1115.6666666666667px;width:184.44444444444457px;text-align:center;top:544.00px;font-size:12px;line-height:12px;color:#e6e6e6;letter-spacing:0.1px;">02-01-2020 18:39:50</div>
<div class="t" style="left:1308px;top:544.00px;font-size:12px;line-height:12px;color:#367fc0;">The Laundromat [308156]</div>
<div class="t" style="left:1493px;top:544.00px;font-size:12px;line-height:12px;color:#e6e6e6;">Sharif Khan</div>
<div class="t" style="left:10.0px;width:184.44444444444446px;text-align:center;top:584.00px;font-size:12px;line-height:12px;color:#e6e6e6;">307968</div>
<div class="t" style="left:202.2px;top:584.00px;font-size:12px;line-height:12px;color:#e6e6e6;letter-spacing:0.16px;">extract-tech-metadata</div>
<svg class="b" style="left:386px;top:582px" width="18" height="18" viewBox="0 0 18 18">
<rect x="1" y="1" width="16" height="16" rx="3" fill="none" stroke="#168516" stroke-width="1.8"/>
<path fill="none" stroke="#168516" stroke-width="2.3" stroke-linecap="round" d="M4.6 9.5 L7.6 12.8 L13.4 5"/></svg>
<div class="t" style="left:411px;top:585.70px;font-size:12px;line-height:12px;color:#e6e6e6;">Completed</div>
<div class="t" style="left:570.5px;top:584.00px;font-size:12px;line-height:12px;color:#e6e6e6;">Normal</div>
<div class="t" style="left:746.7777777777778px;width:184.44444444444446px;text-align:center;top:584.00px;font-size:12px;line-height:12px;color:#e6e6e6;letter-spacing:0.1px;">02-01-2020 18:39:40</div>
<div class="t" style="left:930.2222222222223px;width:184.44444444444446px;text-align:center;top:584.00px;font-size:12px;line-height:12px;color:#e6e6e6;letter-spacing:0.1px;">02-01-2020 18:39:41</div>
<div class="t" style="left:1115.6666666666667px;width:184.44444444444457px;text-align:center;top:584.00px;font-size:12px;line-height:12px;color:#e6e6e6;letter-spacing:0.1px;">02-01-2020 18:39:49</div>
<div class="t" style="left:1308px;top:584.00px;font-size:12px;line-height:12px;color:#367fc0;">Proxy - The Laundromat [308&hellip;</div>
<div class="t" style="left:1493px;top:584.00px;font-size:12px;line-height:12px;color:#e6e6e6;">Sharif Khan</div>
<div class="t" style="left:10.0px;width:184.44444444444446px;text-align:center;top:624.00px;font-size:12px;line-height:12px;color:#e6e6e6;">307967</div>
<div class="t" style="left:202.2px;top:624.00px;font-size:12px;line-height:12px;color:#e6e6e6;letter-spacing:0.16px;">fragmented-import</div>
<svg class="b" style="left:386px;top:622px" width="18" height="18" viewBox="0 0 18 18">
<rect x="1" y="1" width="16" height="16" rx="3" fill="none" stroke="#168516" stroke-width="1.8"/>
<path fill="none" stroke="#168516" stroke-width="2.3" stroke-linecap="round" d="M4.6 9.5 L7.6 12.8 L13.4 5"/></svg>
<div class="t" style="left:411px;top:625.70px;font-size:12px;line-height:12px;color:#e6e6e6;">Completed</div>
<div class="t" style="left:570.5px;top:624.00px;font-size:12px;line-height:12px;color:#e6e6e6;">Normal</div>
<div class="t" style="left:746.7777777777778px;width:184.44444444444446px;text-align:center;top:624.00px;font-size:12px;line-height:12px;color:#e6e6e6;letter-spacing:0.1px;">02-01-2020 18:39:40</div>
<div class="t" style="left:930.2222222222223px;width:184.44444444444446px;text-align:center;top:624.00px;font-size:12px;line-height:12px;color:#e6e6e6;letter-spacing:0.1px;">02-01-2020 18:39:40</div>
<div class="t" style="left:1115.6666666666667px;width:184.44444444444457px;text-align:center;top:624.00px;font-size:12px;line-height:12px;color:#e6e6e6;letter-spacing:0.1px;">02-01-2020 18:39:40</div>
<div class="t" style="left:1308px;top:624.00px;font-size:12px;line-height:12px;color:#367fc0;">Proxy - The Laundromat [308&hellip;</div>
<div class="t" style="left:1493px;top:624.00px;font-size:12px;line-height:12px;color:#e6e6e6;">Sharif Khan</div>
<div class="t" style="left:10.0px;width:184.44444444444446px;text-align:center;top:664.00px;font-size:12px;line-height:12px;color:#e6e6e6;">307966</div>
<div class="t" style="left:202.2px;top:664.00px;font-size:12px;line-height:12px;color:#e6e6e6;letter-spacing:0.16px;">fmp-wait-for-fsp</div>
<svg class="b" style="left:386px;top:662px" width="18" height="18" viewBox="0 0 18 18">
<rect x="1" y="1" width="16" height="16" rx="3" fill="none" stroke="#168516" stroke-width="1.8"/>
<path fill="none" stroke="#168516" stroke-width="2.3" stroke-linecap="round" d="M4.6 9.5 L7.6 12.8 L13.4 5"/></svg>
<div class="t" style="left:411px;top:665.70px;font-size:12px;line-height:12px;color:#e6e6e6;">Completed</div>
<div class="t" style="left:570.5px;top:664.00px;font-size:12px;line-height:12px;color:#e6e6e6;">Normal</div>
<div class="t" style="left:746.7777777777778px;width:184.44444444444446px;text-align:center;top:664.00px;font-size:12px;line-height:12px;color:#e6e6e6;letter-spacing:0.1px;">02-01-2020 18:38:38</div>
<div class="t" style="left:930.2222222222223px;width:184.44444444444446px;text-align:center;top:664.00px;font-size:12px;line-height:12px;color:#e6e6e6;letter-spacing:0.1px;">02-01-2020 18:38:38</div>
<div class="t" style="left:1115.6666666666667px;width:184.44444444444457px;text-align:center;top:664.00px;font-size:12px;line-height:12px;color:#e6e6e6;letter-spacing:0.1px;">02-01-2020 18:39:39</div>
<div class="t" style="left:1308px;top:664.00px;font-size:12px;line-height:12px;color:#367fc0;">The Laundromat [308156]</div>
<div class="t" style="left:1493px;top:664.00px;font-size:12px;line-height:12px;color:#e6e6e6;">Sharif Khan</div>
<div class="t" style="left:10.0px;width:184.44444444444446px;text-align:center;top:704.00px;font-size:12px;line-height:12px;color:#e6e6e6;">307965</div>
<div class="t" style="left:202.2px;top:704.00px;font-size:12px;line-height:12px;color:#e6e6e6;letter-spacing:0.16px;">fmp-send-to-fsp</div>
<svg class="b" style="left:386px;top:702px" width="18" height="18" viewBox="0 0 18 18">
<rect x="1" y="1" width="16" height="16" rx="3" fill="none" stroke="#168516" stroke-width="1.8"/>
<path fill="none" stroke="#168516" stroke-width="2.3" stroke-linecap="round" d="M4.6 9.5 L7.6 12.8 L13.4 5"/></svg>
<div class="t" style="left:411px;top:705.70px;font-size:12px;line-height:12px;color:#e6e6e6;">Completed</div>
<div class="t" style="left:570.5px;top:704.00px;font-size:12px;line-height:12px;color:#e6e6e6;">Normal</div>
<div class="t" style="left:746.7777777777778px;width:184.44444444444446px;text-align:center;top:704.00px;font-size:12px;line-height:12px;color:#e6e6e6;letter-spacing:0.1px;">02-01-2020 18:38:37</div>
<div class="t" style="left:930.2222222222223px;width:184.44444444444446px;text-align:center;top:704.00px;font-size:12px;line-height:12px;color:#e6e6e6;letter-spacing:0.1px;">02-01-2020 18:38:38</div>
<div class="t" style="left:1115.6666666666667px;width:184.44444444444457px;text-align:center;top:704.00px;font-size:12px;line-height:12px;color:#e6e6e6;letter-spacing:0.1px;">02-01-2020 18:38:38</div>
<div class="t" style="left:1308px;top:704.00px;font-size:12px;line-height:12px;color:#367fc0;">The Laundromat [308156]</div>
<div class="t" style="left:1493px;top:704.00px;font-size:12px;line-height:12px;color:#e6e6e6;">Sharif Khan</div>
<div class="t" style="left:10.0px;width:184.44444444444446px;text-align:center;top:744.00px;font-size:12px;line-height:12px;color:#e6e6e6;">308366</div>
<div class="t" style="left:202.2px;top:744.00px;font-size:12px;line-height:12px;color:#e6e6e6;letter-spacing:0.16px;">fragmented-prepare</div>
<svg class="b" style="left:386px;top:742px" width="18" height="18" viewBox="0 0 18 18">
<rect x="1" y="1" width="16" height="16" rx="3" fill="none" stroke="#168516" stroke-width="1.8"/>
<path fill="none" stroke="#168516" stroke-width="2.3" stroke-linecap="round" d="M4.6 9.5 L7.6 12.8 L13.4 5"/></svg>
<div class="t" style="left:411px;top:745.70px;font-size:12px;line-height:12px;color:#e6e6e6;">Completed</div>
<div class="t" style="left:570.5px;top:744.00px;font-size:12px;line-height:12px;color:#e6e6e6;">Normal</div>
<div class="t" style="left:746.7777777777778px;width:184.44444444444446px;text-align:center;top:744.00px;font-size:12px;line-height:12px;color:#e6e6e6;letter-spacing:0.1px;">02-01-2020 18:38:36</div>
<div class="t" style="left:930.2222222222223px;width:184.44444444444446px;text-align:center;top:744.00px;font-size:12px;line-height:12px;color:#e6e6e6;letter-spacing:0.1px;">02-01-2020 18:38:37</div>
<div class="t" style="left:1115.6666666666667px;width:184.44444444444457px;text-align:center;top:744.00px;font-size:12px;line-height:12px;color:#e6e6e6;letter-spacing:0.1px;">02-01-2020 18:38:37</div>
<div class="t" style="left:1308px;top:744.00px;font-size:12px;line-height:12px;color:#367fc0;">The Laundromat [308156]</div>
<div class="t" style="left:1493px;top:744.00px;font-size:12px;line-height:12px;color:#e6e6e6;">Sharif Khan</div>
<div class="t" style="left:10.0px;width:184.44444444444446px;text-align:center;top:784.00px;font-size:12px;line-height:12px;color:#e6e6e6;">307964</div>
<div class="t" style="left:202.2px;top:784.00px;font-size:12px;line-height:12px;color:#e6e6e6;letter-spacing:0.16px;">launch-create-fragmented-pr&hellip;</div>
<svg class="b" style="left:386px;top:782px" width="18" height="18" viewBox="0 0 18 18">
<rect x="1" y="1" width="16" height="16" rx="3" fill="none" stroke="#168516" stroke-width="1.8"/>
<path fill="none" stroke="#168516" stroke-width="2.3" stroke-linecap="round" d="M4.6 9.5 L7.6 12.8 L13.4 5"/></svg>
<div class="t" style="left:411px;top:785.70px;font-size:12px;line-height:12px;color:#e6e6e6;">Completed</div>
<div class="t" style="left:570.5px;top:784.00px;font-size:12px;line-height:12px;color:#e6e6e6;">Normal</div>
<div class="t" style="left:746.7777777777778px;width:184.44444444444446px;text-align:center;top:784.00px;font-size:12px;line-height:12px;color:#e6e6e6;letter-spacing:0.1px;">02-01-2020 18:38:36</div>
<div class="t" style="left:930.2222222222223px;width:184.44444444444446px;text-align:center;top:784.00px;font-size:12px;line-height:12px;color:#e6e6e6;letter-spacing:0.1px;">02-01-2020 18:38:36</div>
<div class="t" style="left:1115.6666666666667px;width:184.44444444444457px;text-align:center;top:784.00px;font-size:12px;line-height:12px;color:#e6e6e6;letter-spacing:0.1px;">02-01-2020 18:39:49</div>
<div class="t" style="left:1308px;top:784.00px;font-size:12px;line-height:12px;color:#367fc0;">The Laundromat [308156]</div>
<div class="t" style="left:1493px;top:784.00px;font-size:12px;line-height:12px;color:#e6e6e6;">Sharif Khan</div>
<div class="t" style="left:10.0px;width:184.44444444444446px;text-align:center;top:824.00px;font-size:12px;line-height:12px;color:#e6e6e6;">307963</div>
<div class="t" style="left:202.2px;top:824.00px;font-size:12px;line-height:12px;color:#e6e6e6;letter-spacing:0.16px;">aqc-video</div>
<svg class="b" style="left:386px;top:822px" width="18" height="18" viewBox="0 0 18 18">
<rect x="1" y="1" width="16" height="16" rx="3" fill="none" stroke="#168516" stroke-width="1.8"/>
<path fill="none" stroke="#168516" stroke-width="2.3" stroke-linecap="round" d="M4.6 9.5 L7.6 12.8 L13.4 5"/></svg>
<div class="t" style="left:411px;top:825.70px;font-size:12px;line-height:12px;color:#e6e6e6;">Completed</div>
<div class="t" style="left:570.5px;top:824.00px;font-size:12px;line-height:12px;color:#e6e6e6;">Normal</div>
<div class="t" style="left:746.7777777777778px;width:184.44444444444446px;text-align:center;top:824.00px;font-size:12px;line-height:12px;color:#e6e6e6;letter-spacing:0.1px;">02-01-2020 18:38:36</div>
<div class="t" style="left:930.2222222222223px;width:184.44444444444446px;text-align:center;top:824.00px;font-size:12px;line-height:12px;color:#e6e6e6;letter-spacing:0.1px;">02-01-2020 18:38:36</div>
<div class="t" style="left:1115.6666666666667px;width:184.44444444444457px;text-align:center;top:824.00px;font-size:12px;line-height:12px;color:#e6e6e6;letter-spacing:0.1px;">02-01-2020 18:38:36</div>
<div class="t" style="left:1308px;top:824.00px;font-size:12px;line-height:12px;color:#367fc0;">The Laundromat [308156]</div>
<div class="t" style="left:1493px;top:824.00px;font-size:12px;line-height:12px;color:#e6e6e6;">Sharif Khan</div>
</body></html>
